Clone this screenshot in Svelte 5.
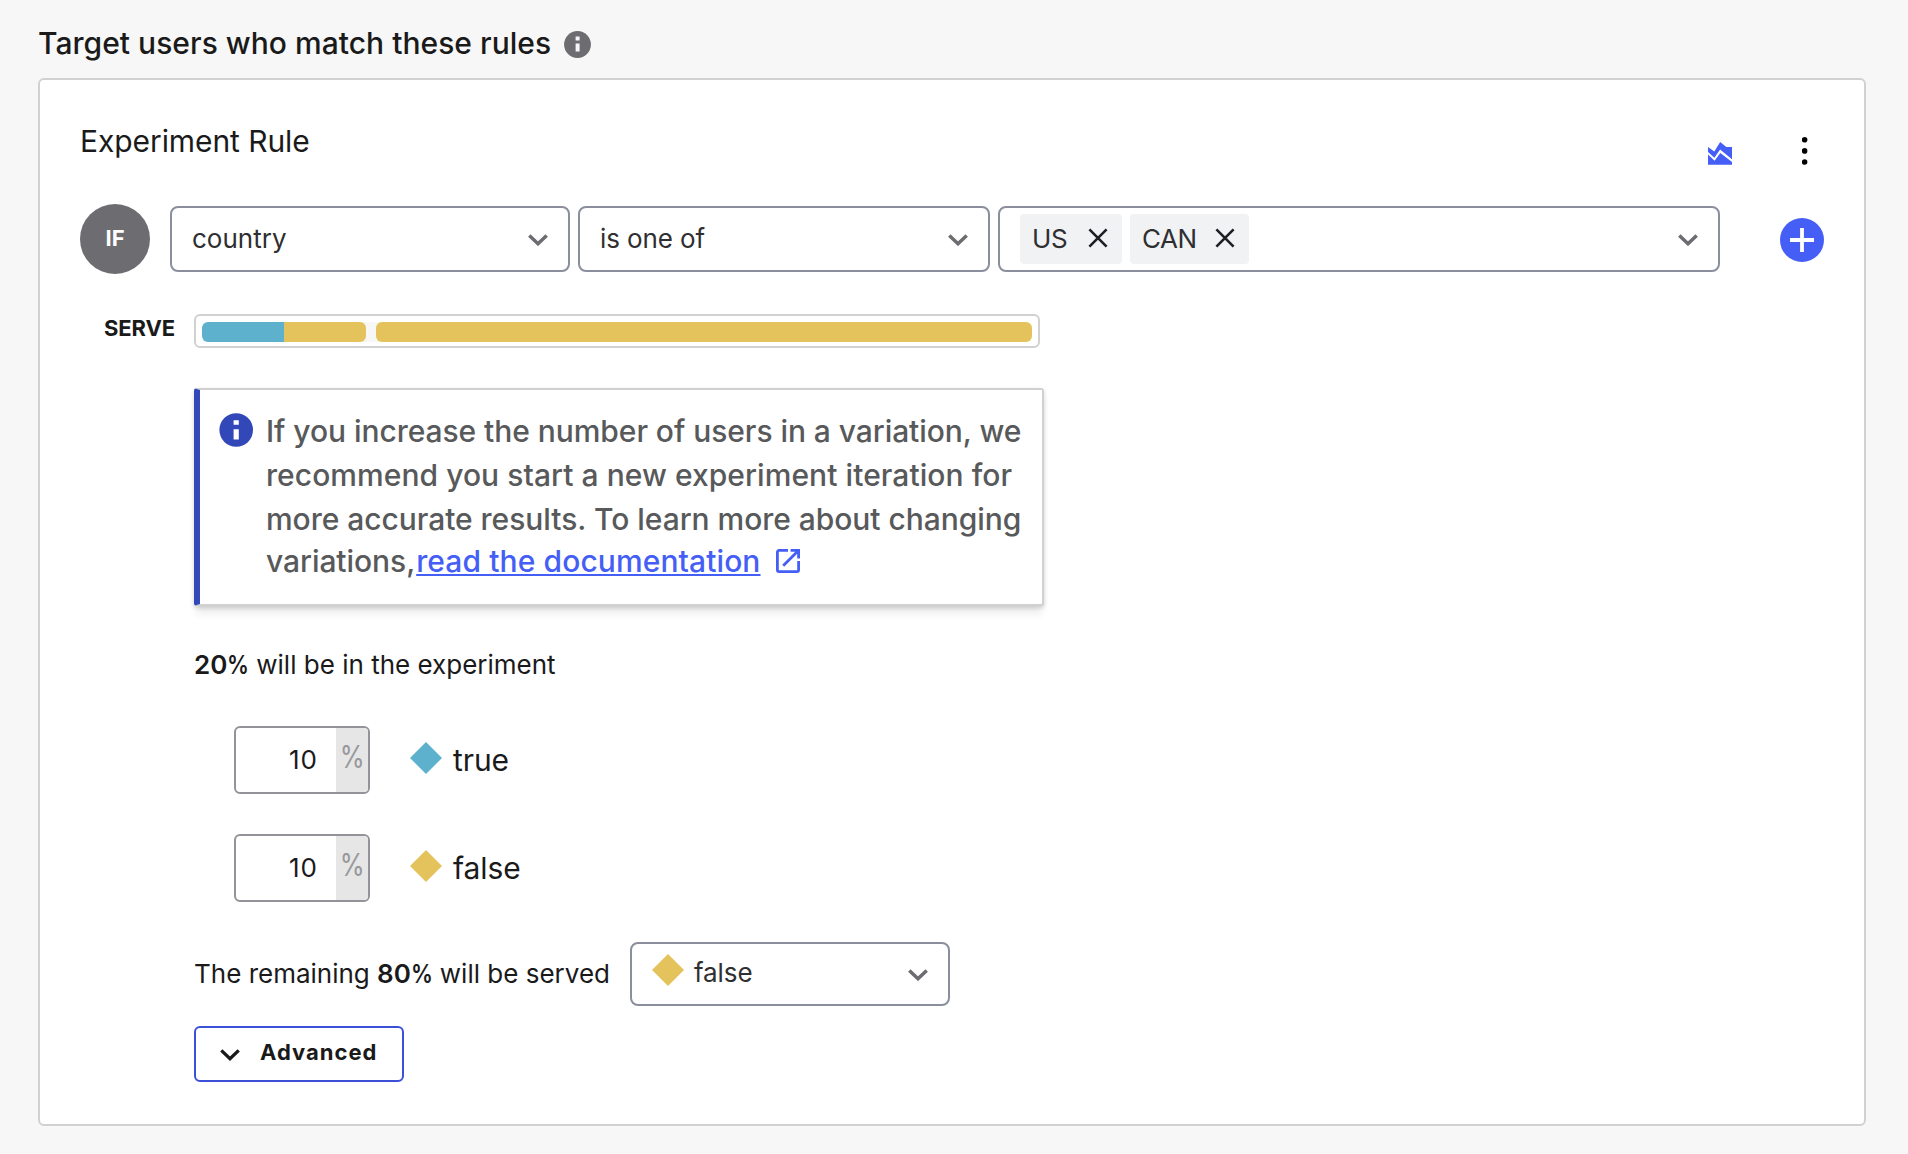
<script>
  const variations = [
    { name: 'true', percent: 10, tone: 'teal' },
    { name: 'false', percent: 10, tone: 'gold' },
  ];
  const selects = [
    { value: 'country', size: 'attribute' },
    { value: 'is one of', size: 'operator' },
  ];
  const countries = ['US', 'CAN'];
</script>

{#snippet chevron(kind)}
  <svg class="chevron {kind}" viewBox="0 0 20 12" width="20" height="12">
    <path d="M1.3 1.4 10 9.7 18.7 1.4" />
  </svg>
{/snippet}

{#snippet diamond(tone)}
  <svg class="diamond {tone}" viewBox="0 0 32 32" width="32" height="32">
    <path d="M16 0 32 16 16 32 0 16z" />
  </svg>
{/snippet}

<main>
  <header>
    <h1>Target users who match these rules</h1>
    <svg class="hint" viewBox="0 0 27 27" width="27" height="27">
      <circle cx="13.5" cy="13.5" r="13.4" />
      <path d="M11.6 5.6h4v4h-4zM11.6 12.4h4v8h-4z" />
    </svg>
  </header>

  <section class="card">
    <div class="head">
      <h2>Experiment Rule</h2>
      <div class="actions">
        <svg class="chart" viewBox="0 0 24 24" width="24" height="24">
          <path d="M0 6 6.3 10.6 12.2 1 18.3 6H24V18.3L12.1 8.6 6.4 16.8 0 11z" />
          <path d="M0 13.4 6.6 19.8 12.3 12 24 21V23.7H0z" />
        </svg>
        <svg class="more" viewBox="0 0 6 30" width="6" height="30">
          <circle cx="2.6" cy="3.8" r="2.8" />
          <circle cx="2.6" cy="14.9" r="2.8" />
          <circle cx="2.6" cy="26" r="2.8" />
        </svg>
      </div>
    </div>

    <div class="condition">
      <span class="if">IF</span>
      {#each selects as select}
        <div class="select {select.size}">
          <span>{select.value}</span>
          {@render chevron('muted')}
        </div>
      {/each}
      <div class="select values">
        <div class="chips">
          {#each countries as country}
            <span class="chip">
              {country}
              <svg viewBox="0 0 20 20" width="20" height="20"><path d="M1.4 1.4 18.6 18.6M18.6 1.4 1.4 18.6" /></svg>
            </span>
          {/each}
        </div>
        {@render chevron('muted')}
      </div>
      <svg class="add" viewBox="0 0 44 44" width="44" height="44">
        <circle cx="22" cy="22" r="22" />
        <path d="M22 10V34M10 22H34" />
      </svg>
    </div>

    <div class="serve">
      <span class="label">SERVE</span>
      <div class="rollout">
        <div class="bar">
          <div class="track">
            <div class="group experiment">
              {#each variations as v}<i class={v.tone}></i>{/each}
            </div>
            <div class="group rest"><i class="gold"></i></div>
          </div>
        </div>

        <aside class="note">
          <svg class="info" viewBox="0 0 34 34" width="34" height="34">
            <circle cx="17.2" cy="17" r="16.8" />
            <path d="M14.6 7.3h5.2v4.5h-5.2zM14.6 16.2h5.2v10.2h-5.2z" />
          </svg>
          <div class="copy">
            <p>If you increase the number of users in a variation, we</p>
            <p class="loose">recommend you start a new experiment iteration for</p>
            <p class="even">more accurate results. To learn more about changing</p>
            <p class="last">
              <span>variations,</span><span class="link">read the documentation</span>
              <svg viewBox="0 0 24 24" width="24" height="24">
                <path d="M12 1.4H3A1.6 1.6 0 0 0 1.4 3V21A1.6 1.6 0 0 0 3 22.6H21A1.6 1.6 0 0 0 22.6 21V12M14.6 1.4H22.6V9.4M22 2 7.2 16.8" />
              </svg>
            </p>
          </div>
        </aside>

        <p class="line total"><b>20<span class="pct">%</span></b> will be in the experiment</p>

        <div class="variations">
          {#each variations as v}
            <div class="variation">
              <div class="amount"><span class="num">{v.percent}</span><span class="unit"><span class="pct">%</span></span></div>
              {@render diamond(v.tone)}
              <span class="name">{v.name}</span>
            </div>
          {/each}
        </div>

        <div class="remaining">
          <p class="line">The remaining <b>80<span class="pct">%</span></b> will be served</p>
          <div class="select fallback">
            {@render diamond('gold')}
            <span>false</span>
            {@render chevron('muted')}
          </div>
        </div>

        <button class="advanced">
          {@render chevron('dark')}
          <span>Advanced</span>
        </button>
      </div>
    </div>
  </section>
</main>

<style>
  :global(body) { background: #f7f7f7; }
  main {
    box-sizing: border-box;
    height: 1154px;
    padding: 0 42px 28px 38px;
    font-family: Inter, "Liberation Sans", sans-serif;
    color: #1a1a1b;
  }
  svg { display: block; flex: none; }
  h1, h2, p { margin: 0; }

  header { display: flex; align-items: flex-start; height: 78px; box-sizing: border-box; padding-top: 21px; }
  h1 { font-size: 30px; line-height: 44px; font-weight: 500; letter-spacing: 0.03px; }
  .hint { margin: 10px 0 0 13px; fill: #6c6c71; }
  .hint path { fill: #f7f7f7; }

  .card {
    box-sizing: border-box;
    height: 1048px;
    padding: 38px 40px 0;
    border: 2px solid #d1d1d1;
    border-radius: 6px;
    background: #fff;
  }
  .head { display: flex; justify-content: space-between; height: 86px; }
  h2 { font-size: 30px; line-height: 46px; font-weight: 400; letter-spacing: -0.08px; }
  .actions { display: flex; gap: 70px; padding: 18px 16px 0 0; }
  .chart { margin-top: 5px; fill: #455ff6; }
  .more { fill: #000; }

  .condition { display: flex; align-items: center; }
  .if {
    box-sizing: border-box;
    display: flex; align-items: center; justify-content: center;
    width: 70px; height: 70px; margin-right: 20px; padding-bottom: 2px;
    border-radius: 50%;
    background: #6c6c71; color: #fff;
    font-size: 22px; font-weight: 700;
  }
  .select {
    box-sizing: border-box;
    display: flex; align-items: center; justify-content: space-between;
    height: 66px; margin-right: 8px; padding: 0 20px;
    border: 2px solid #8b8f9d; border-radius: 8px;
    background: #fff; color: #2f2f31;
    font-size: 26px; line-height: 62px;
  }
  .attribute { width: 400px; }
  .operator { width: 412px; letter-spacing: -0.1px; }
  .values { width: 722px; }
  .chips { display: flex; gap: 8px; }
  .chip {
    box-sizing: border-box;
    display: flex; align-items: center; justify-content: space-between; gap: 18px;
    min-width: 102px; height: 50px; padding: 0 14px 0 12px;
    border-radius: 4px; background: #f1f2f4;
    letter-spacing: -0.4px;
  }
  .chip svg { margin-top: -2px; stroke: #1c1f24; stroke-width: 2.6; }
  .chevron { fill: none; stroke: #6c6c71; stroke-width: 3.5; margin-top: 2px; }
  .chevron.dark { stroke: #1a1a1b; stroke-width: 3.3; }
  .add { margin: 2px 0 0 52px; fill: #455ff6; }
  .add path { stroke: #fff; stroke-width: 3.8; }

  .serve { display: flex; align-items: flex-start; padding-top: 40px; }
  .label { box-sizing: border-box; width: 114px; padding: 2px 0 0 24px; font-size: 22px; line-height: 24px; font-weight: 700; letter-spacing: -0.1px; }
  .bar {
    box-sizing: border-box;
    width: 846px; height: 34px; padding: 6px;
    border: 2px solid #d1d1d1; border-radius: 6px;
  }
  .track { display: flex; gap: 10px; height: 20px; margin-top: 0; background: #f7f7f7; border-radius: 6px; }
  .group { display: flex; border-radius: 6px; overflow: hidden; }
  .group i { flex: 1; }
  .experiment { width: 164px; }
  .rest { flex: 1; }
  i.teal { background: #5eb1cd; }
  i.gold { background: #e5c35c; }

  .note {
    box-sizing: border-box;
    display: flex;
    width: 850px; height: 218px; margin-top: 40px; padding: 21px 0 0 19px;
    border: 2px solid #d1d1d1; border-left: 6px solid #3247b8; border-radius: 3px;
    background: #fff;
    box-shadow: 0 10px 8px -2px rgba(0, 0, 0, 0.07), 0 2px 4px rgba(0, 0, 0, 0.16);
  }
  .info { margin-top: 2px; fill: #3247b8; }
  .info path { fill: #fff; }
  .copy { margin-top: -2px; padding-left: 13px; color: #58595b; font-size: 30px; line-height: 44px; font-weight: 500; letter-spacing: -0.06px; white-space: nowrap; }
  .loose { letter-spacing: 0.06px; }
  .even { letter-spacing: -0.04px; }
  .last { display: flex; align-items: center; line-height: 42px; margin-top: -1px; }
  .link { margin-left: 1px; color: #455ff6; letter-spacing: 0.1px; text-decoration: underline; text-decoration-thickness: 2px; text-underline-offset: 2px; text-decoration-skip-ink: none; }
  .last svg { margin-left: 15px; fill: none; stroke: #455ff6; stroke-width: 2.8; }

  .line { font-size: 26px; line-height: 36px; white-space: nowrap; }
  b { font-weight: 600; }
  .pct { display: inline-block; transform: scaleX(0.84); transform-origin: left; margin-right: -4.5px; }
  .total { margin-top: 41px; }

  .variations { display: flex; flex-direction: column; gap: 40px; margin: 43px 0 0 40px; }
  .variation { display: flex; align-items: center; height: 68px; }
  .amount {
    box-sizing: border-box;
    display: flex; justify-content: flex-end;
    width: 136px; height: 68px;
    border: 2px solid #939399; border-radius: 6px; overflow: hidden;
    background: #fff;
  }
  .num { padding-right: 18.5px; font-size: 26px; line-height: 64px; letter-spacing: 0.7px; }
  .unit { display: flex; justify-content: center; width: 32px; background: #e6e6e6; color: #98989c; font-size: 31px; line-height: 58px; }
  .unit .pct { transform: scaleX(0.82); transform-origin: center; margin: 0 -4px; }
  .diamond.teal { fill: #5eb1cd; }
  .diamond.gold { fill: #e5c35c; }
  .variation .diamond { margin: -4px 0 0 40px; }
  .name { margin-left: 11px; font-size: 30px; line-height: 66px; letter-spacing: -0.1px; }

  .remaining { display: flex; align-items: center; justify-content: space-between; width: 756px; margin-top: 40px; }
  .fallback { width: 320px; height: 64px; margin-right: 0; letter-spacing: -0.1px; }
  .fallback .diamond { margin-top: -8px; }
  .fallback span { flex: 1; margin: -2px 0 0 10px; }

  .advanced {
    box-sizing: border-box;
    display: flex; align-items: center;
    width: 210px; height: 56px; margin-top: 20px; padding: 0 0 0 24px;
    border: 2px solid #3b50d6; border-radius: 6px;
    background: #fff; color: #1a1a1b;
    font: 700 22px/52px Inter, "Liberation Sans", sans-serif; letter-spacing: 1px;
  }
  .advanced span { margin: -4px 0 0 20px; }
</style>
